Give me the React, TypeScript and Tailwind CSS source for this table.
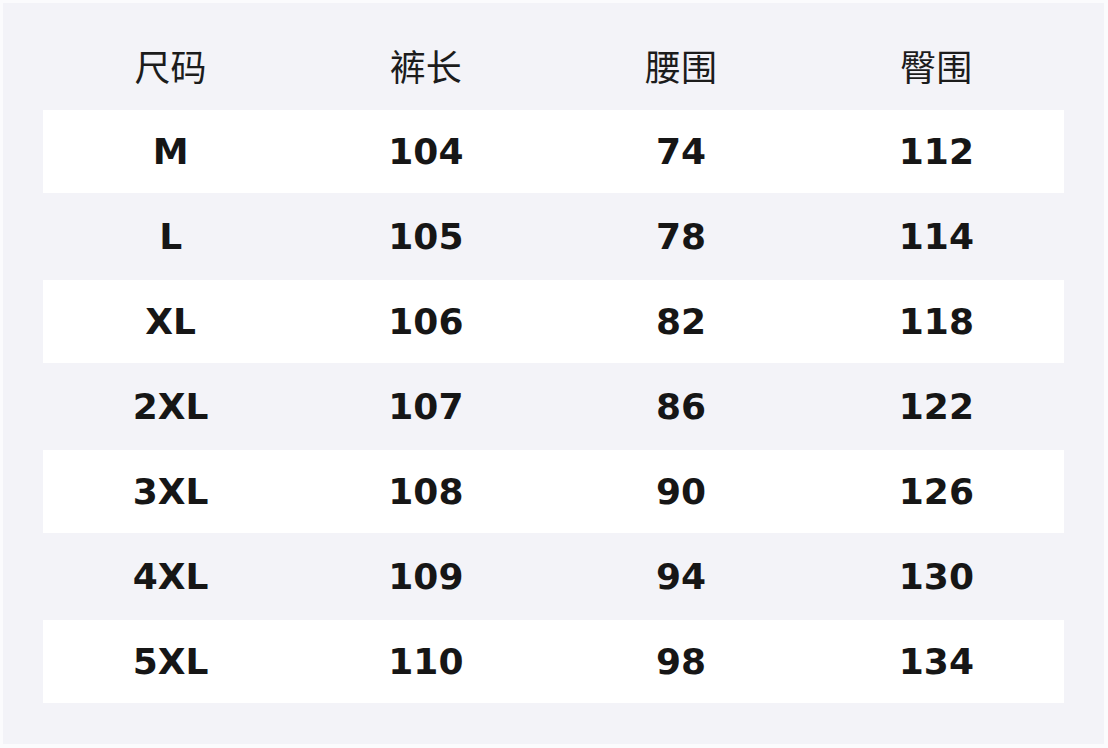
import React from "react";

const headers = ["尺码", "裤长", "腰围", "臀围"];

const rows = [
  ["M", "104", "74", "112"],
  ["L", "105", "78", "114"],
  ["XL", "106", "82", "118"],
  ["2XL", "107", "86", "122"],
  ["3XL", "108", "90", "126"],
  ["4XL", "109", "94", "130"],
  ["5XL", "110", "98", "134"],
];

const App: React.FC = () => {
  return (
    <div className="w-[1108px] h-[748px] bg-[#fbfbfd] p-[3px]">
      <div className="h-[741px] w-[1101px] bg-[#f3f3f8] px-[40px]">
        {/* Header */}
        <div className="grid grid-cols-4 h-[107px] items-center pt-[17px]">
          {headers.map((h) => (
            <div
              key={h}
              className="text-center text-[36px] text-[#1c1c1c] font-['Noto_Sans_CJK_SC',sans-serif]"
            >
              {h}
            </div>
          ))}
        </div>

        {/* Rows */}
        <div className="flex flex-col">
          {rows.map((r, i) => (
            <div
              key={r[0]}
              className={`grid grid-cols-4 items-center ${i % 2 === 0 ? "bg-white h-[83px]" : "h-[87px]"}`}
            >
              {r.map((c, j) => (
                <div
                  key={j}
                  className="text-center text-[36px] font-bold text-[#161616] font-['DejaVu_Sans',sans-serif]"
                >
                  {c}
                </div>
              ))}
            </div>
          ))}
        </div>
      </div>
    </div>
  );
};

export default App;
